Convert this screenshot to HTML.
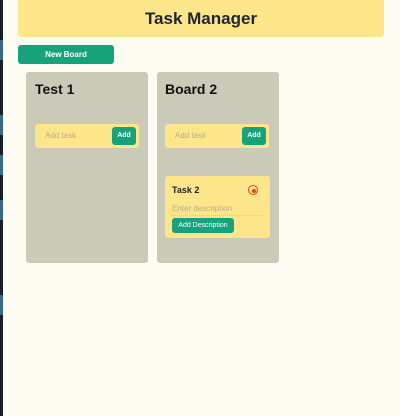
<!DOCTYPE html>
<html><head><style>
body{margin:0;width:400px;height:416px;background:#fcfcf2;font-family:"Liberation Sans",sans-serif;position:relative;overflow:hidden}
.a{position:absolute}
.hdr{left:18px;top:0;width:366px;height:37px;background:#fde58a;border-radius:0 0 3px 3px;text-align:center;font-weight:bold;font-size:17px;line-height:37px;color:#1f2533}
.btn{background:#16a37c;color:#fff;font-weight:bold;border-radius:3px;text-align:center}
.board{background:#cbc9b8;border-radius:3px;top:72px;width:122px;height:191px}
.bt{font-weight:bold;font-size:14px;color:#111}
.row{background:#fde58a;border-radius:3px;height:24px;width:104px}
.ph{color:#b8ae8c;font-size:8px}
</style></head><body>
<div class="a" style="left:0;top:0;width:3px;height:416px;background:#18202c"></div>
<div class="a" style="left:0;top:40px;width:3px;height:20px;background:#3a6a8a"></div>
<div class="a" style="left:0;top:115px;width:3px;height:20px;background:#3a6a8a"></div>
<div class="a" style="left:0;top:155px;width:3px;height:20px;background:#3a6a8a"></div>
<div class="a" style="left:0;top:200px;width:3px;height:20px;background:#3a6a8a"></div>
<div class="a" style="left:0;top:295px;width:3px;height:20px;background:#3a6a8a"></div>
<div class="a hdr">Task Manager</div>
<div class="a btn" style="left:18px;top:45px;width:96px;height:19px;line-height:19px;font-size:8px">New Board</div>

<div class="a board" style="left:26px"></div>
<div class="a bt" style="left:35px;top:81px">Test 1</div>
<div class="a row" style="left:35px;top:124px"></div>
<div class="a ph" style="left:45px;top:131px">Add task</div>
<div class="a btn" style="left:112px;top:127px;width:24px;height:18px;font-size:7px"><div style="margin-top:5px">Add</div></div>

<div class="a board" style="left:157px"></div>
<div class="a bt" style="left:165px;top:81px">Board 2</div>
<div class="a row" style="left:165px;top:124px"></div>
<div class="a ph" style="left:175px;top:131px">Add task</div>
<div class="a btn" style="left:242px;top:127px;width:24px;height:18px;font-size:7px"><div style="margin-top:5px">Add</div></div>

<div class="a row" style="left:165px;top:176px;height:62px;width:105px"></div>
<div class="a" style="left:172px;top:185px;font-weight:bold;font-size:9px;color:#222">Task 2</div>
<div class="a" style="left:248px;top:185px;width:8px;height:8px;border:1.5px solid #e0452a;border-radius:50%"></div>
<div class="a" style="left:251.5px;top:188.5px;width:4px;height:4px;background:#e0452a;border-radius:50%"></div>
<div class="a ph" style="left:172px;top:204px">Enter description</div>
<div class="a" style="left:172px;top:215px;width:90px;border-top:1px dotted #d8cc99"></div>
<div class="a btn" style="left:172px;top:218px;width:62px;height:15px;font-size:7px;font-weight:normal"><div style="margin-top:4px">Add Description</div></div>
</body></html>
